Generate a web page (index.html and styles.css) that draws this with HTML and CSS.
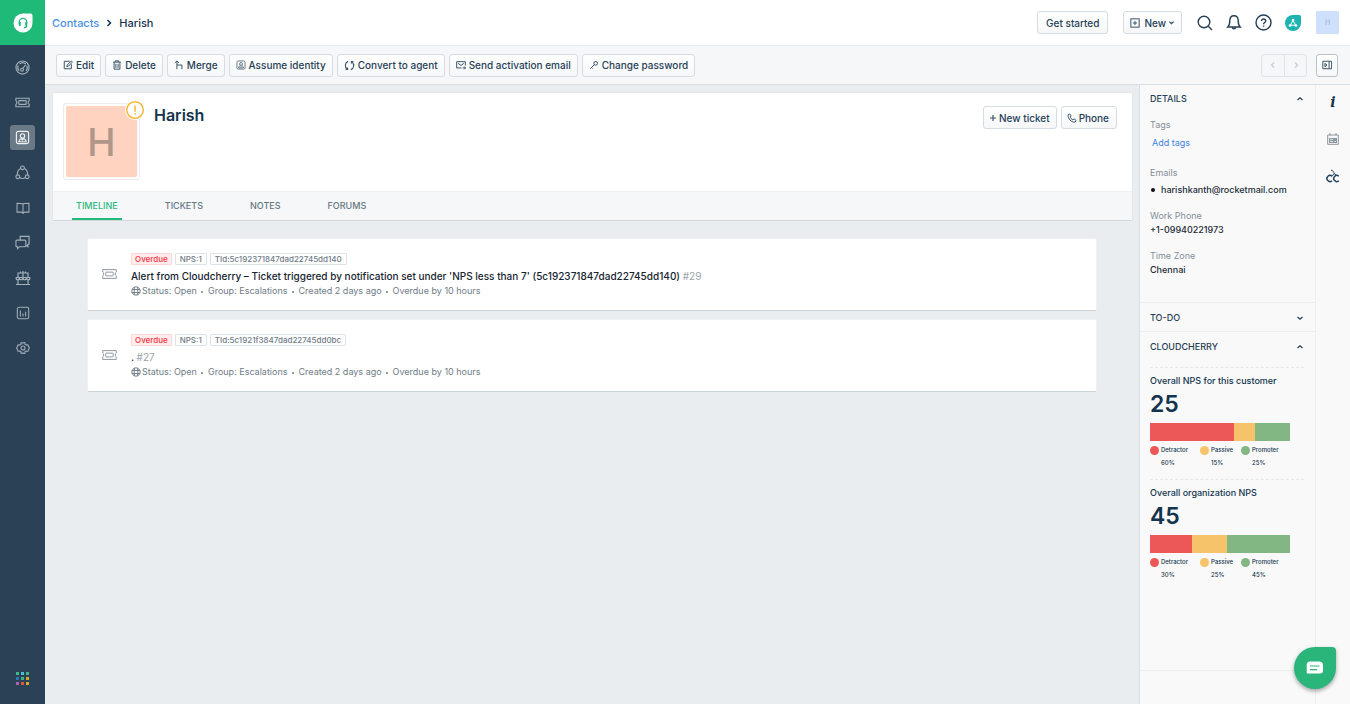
FILE: index.html
```html
<!DOCTYPE html>
<html lang="en">
<head>
<meta charset="utf-8">
<title>Harish - Contacts</title>
<link rel="stylesheet" href="styles.css">
</head>
<body>
<svg class="sprite" aria-hidden="true">
  <symbol id="person" viewBox="0 0 16 16"><rect x="1.500" y="1.500" width="13" height="13" rx="2"/><circle cx="8" cy="6.300" r="2.300"/><path d="M4 12.500c.4-2 1.300-3 2.700-3.300L8 10.500l1.300-1.300c1.400.3 2.300 1.300 2.700 3.300z"/></symbol>
  <symbol id="ticket" viewBox="0 0 16 12"><path d="M.8 1.300h14.400v2.700c-1.400.3-1.400 3.700 0 4v2.700H.8V8c1.400-.3 1.400-3.700 0-4z"/><rect class="core" x="4" y="4" width="8" height="4" rx=".5"/></symbol>
  <symbol id="globe" viewBox="0 0 16 16"><circle cx="8" cy="8" r="6.700"/><path d="M5.800 1.800c-1 4-1 8.400 0 12.400M10.200 1.800c1 4 1 8.400 0 12.400M1.600 5.600h12.800M1.600 10.400h12.800"/></symbol>
  <symbol id="up" viewBox="0 0 8 8"><path d="M1.500 5 4 2.800 6.500 5"/></symbol>
  <symbol id="down" viewBox="0 0 8 8"><path d="M1.500 3 4 5.200 6.500 3"/></symbol>
</svg>
<div class="app">
  <nav class="sidebar" aria-label="Main">
    <a class="logo" href="#" aria-label="Home"><svg width="20" height="20" viewBox="0 0 20 20"><path fill="#fff" d="M10 .5h7.500a2 2 0 0 1 2 2V10A9.500 9.500 0 1 1 10 .5z"/><path fill="none" stroke="#1fb978" stroke-width="1.300" d="M6.300 11V9a3.700 3.700 0 0 1 7.400 0v2M13.700 12c0 1.600-1 2.700-2.700 2.700"/><path stroke="#1fb978" stroke-width="2" stroke-linecap="round" d="M6.800 9.700v2.300M13.200 9.700v2.300"/></svg></a>
    <div class="nav-list">
      <a class="nav" href="#" aria-label="Dashboard"><svg class="ic" width="15" height="15" viewBox="0 0 16 16"><circle cx="8" cy="8" r="7"/><path d="M4.300 11.500A5 5 0 0 1 3.500 5.800M4.800 4.300a5 5 0 0 1 6.700 0M12.600 6a5 5 0 0 1-.8 5.500M8.300 9l3-3.700"/><circle cx="7.500" cy="10.300" r="1.500"/></svg></a>
      <a class="nav" href="#" aria-label="Tickets"><svg class="ic" width="15" height="11"><use href="#ticket"/></svg></a>
      <a class="nav active" href="#" aria-label="Contacts"><svg class="ic" width="15" height="15"><use href="#person"/></svg></a>
      <a class="nav" href="#" aria-label="Social"><svg class="ic" width="15" height="15" viewBox="0 0 16 16"><circle cx="8" cy="3" r="2"/><circle cx="3" cy="12.500" r="2"/><circle cx="13" cy="12.500" r="2"/><path d="M6 3.800C3.800 4.800 2.500 7 2.500 10M10 3.800c2.200 1 3.500 3.200 3.500 6.200M5 13.700c2 1 4 1 6 0"/></svg></a>
      <a class="nav" href="#" aria-label="Solutions"><svg class="ic" width="14" height="14" viewBox="0 0 16 16"><path d="M8 3.500C7 2.500 5.500 2.500 1.200 2.500v10.200H6l2 1.500 2-1.500h4.800V2.500C10.500 2.500 9 2.500 8 3.500zM8 3.500v10"/></svg></a>
      <a class="nav" href="#" aria-label="Forums"><svg class="ic" width="15" height="15" viewBox="0 0 16 16"><path d="M5.500 5V1.500H15v8.300h-1.300v2.700l-1.900-1.500M2 5.500h8.500q1 0 1 1v5q0 1-1 1H4.800L2.800 14.500v-2H2q-1 0-1-1v-5q0-1 1-1z"/></svg></a>
      <a class="nav" href="#" aria-label="Marketplace"><svg class="ic" width="16" height="16" viewBox="0 0 16 16"><path d="M1 14.500h14M3 14.500V9.500M13 14.500V9.500M1 7.500h14M3 7V3h10v4M8 1v6M5.500 1.500V3M10.500 1.500V3M1 7.500c0 3 3.500 3 3.500 0 0 3 3.500 3 3.500 0 0 3 3.500 3 3.500 0 0 3 3.500 3 3.500 0"/></svg></a>
      <a class="nav" href="#" aria-label="Reports"><svg class="ic" width="14" height="14" viewBox="0 0 16 16"><rect x="1.500" y="1.500" width="13" height="13" rx="2"/><path d="M5 12V5M8 12V8.500M11 12V6.500"/></svg></a>
      <a class="nav" href="#" aria-label="Admin"><svg class="ic" width="14" height="14" viewBox="0 0 16 16"><path d="M5.800 3.800 5.500 2.500Q6.500 1.200 7.300 2.200h1.400q.8-1 1.800.3l-.3 1.300 1.400.8 1.200-.4q1.700.2 1.200 1.400l.7 1.200q1.200.4 0 2.400l-.7 1.200q.5 1.200-1.200 1.400l-1.200-.4-1.400.8.300 1.300q-1 1.300-1.800.3H7.300q-.8 1-1.800-.3l.3-1.300-1.400-.8-1.200.4q-1.700-.2-1.200-1.400L1.300 9.200q-1.200-.4 0-2.400L2 5.600q-.5-1.200 1.200-1.400l1.200.4z"/><circle cx="8" cy="8" r="2.300"/></svg></a>
    </div>
    <button class="apps" aria-label="Switch product"><svg width="14" height="14" viewBox="0 0 14 14"><path fill="#43b787" d="M0 0h3v3H0z"/><path fill="#41bfd9" d="M5 0h3v3H5z"/><path fill="#4eb181" d="M10 0h3v3h-3z"/><path fill="#2e75b5" d="M0 5h3v3H0z"/><path fill="#3eb87a" d="M5 5h3v3H5z"/><path fill="#d9a52b" d="M10 5h3v3h-3z"/><path fill="#a567a9" d="M0 10h3v3H0z"/><path fill="#e5533f" d="M5 10h3v3H5z"/><path fill="#dda62a" d="M10 10h3v3h-3z"/></svg></button>
  </nav>
  <div class="page">
    <header class="topbar">
      <div class="crumbs"><a href="#">Contacts</a><svg class="ic dark" width="8" height="8" viewBox="0 0 8 8"><path d="M2.500 1 5.500 4 2.500 7"/></svg><span>Harish</span></div>
      <div class="top-actions">
        <button class="btn started">Get started</button>
        <button class="btn new"><svg class="ic" width="10" height="10" viewBox="0 0 12 12"><rect x="1" y="1" width="10" height="10"/><path d="M6 3.500v5M3.500 6h5"/></svg>New<svg class="ic chev" width="7" height="7"><use href="#down"/></svg></button>
        <button class="plain" aria-label="Search"><svg class="ic" width="16" height="16" viewBox="0 0 16 16"><circle cx="7" cy="7" r="5.800"/><path d="m11.300 11.300 3.700 3.700"/></svg></button>
        <button class="plain" aria-label="Notifications"><svg class="ic" width="16" height="18" viewBox="0 0 16 18"><path d="M1.800 13C3.500 11.500 3.800 10 3.800 6.500c0-3 1.600-4.800 4.200-4.800s4.200 1.800 4.200 4.800c0 3.500.3 5 2 6.500zM6.300 13.500c.3 1.700 3.100 1.700 3.400 0"/></svg></button>
        <button class="plain" aria-label="Help"><svg class="ic" width="17" height="17" viewBox="0 0 17 17"><circle cx="8.500" cy="8.500" r="7.500"/><path d="M6.500 7c0-2.800 4.200-2.700 4.200 0 0 1.500-2.100 1.500-2.100 3.200M8.600 11.500v1.300"/></svg></button>
        <button class="plain" aria-label="Freshworks"><svg width="16" height="16" viewBox="0 0 16 16"><path fill="#1cb3b0" d="M8 0h6.500A1.500 1.500 0 0 1 16 1.500V8a8 8 0 1 1-8-8z"/><path fill="none" stroke="#fff" d="M8 5.500 5.300 10.200h5.400z"/><circle cx="8" cy="5" r="1.300" fill="#fff"/><circle cx="5" cy="10.500" r="1.300" fill="#fff"/><circle cx="11" cy="10.500" r="1.300" fill="#fff"/></svg></button>
        <button class="me">H</button>
      </div>
    </header>
    <div class="toolbar">
      <button class="btn"><svg class="ic" width="10" height="10" viewBox="0 0 12 12"><path d="M8 1.500H1.500v9h8.500V5M4.500 8l.5-2 5-4.800 1.300 1.300L6.500 7.400z"/></svg>Edit</button>
      <button class="btn"><svg class="ic" width="10" height="10" viewBox="0 0 12 12"><path d="M1.500 2.500h9M4 2.500V1h4v1.500M2.500 2.500V11h7V2.500M4.700 4.500v5M7.300 4.500v5"/></svg>Delete</button>
      <button class="btn"><svg class="ic" width="10" height="10" viewBox="0 0 12 12"><path d="M3.500 11V1.500M1 3.500l2.500-2.300L6 3.500M3.500 6H9.500v5"/></svg>Merge</button>
      <button class="btn"><svg class="ic" width="10" height="10"><use href="#person"/></svg>Assume identity</button>
      <button class="btn"><svg class="ic" width="11" height="11" viewBox="0 0 12 12"><path d="M4.500 1.500C.8 3 .5 7.800 3.500 10M1.800 10.200h2.100V8.100M7.500 10.500C11.200 9 11.500 4.200 8.500 2M10.200 1.800H8.100v2.100"/></svg>Convert to agent</button>
      <button class="btn"><svg class="ic" width="10" height="10" viewBox="0 0 12 12"><path d="M6.500 9.500H.8V2h10.400v4.500M2.500 4l3.500 2.500L9.500 4M8 9.500h3.500M9.800 7.700l1.700 1.800-1.700 1.700"/></svg>Send activation email</button>
      <button class="btn"><svg class="ic" width="10" height="10" viewBox="0 0 12 12"><circle cx="8" cy="4" r="2.200"/><path d="M6.400 5.600 1.500 10.500M3 9l1.300 1.300"/></svg>Change password</button>
      <div class="pager">
        <button aria-label="Previous" disabled><svg class="ic" width="8" height="8" viewBox="0 0 8 8"><path d="M5 1.500 2.500 4 5 6.500"/></svg></button><button aria-label="Next" disabled><svg class="ic" width="8" height="8" viewBox="0 0 8 8"><path d="M3 1.500 5.500 4 3 6.500"/></svg></button>
      </div>
      <button class="btn toggle" aria-label="Toggle side panel"><svg class="ic" width="10" height="10" viewBox="0 0 12 12"><path d="M1 1.500h10.500v9H1zM8.500 1.500v9M3.500 4l2.500 2-2.500 2z"/></svg></button>
    </div>
    <div class="body">
      <main class="content">
        <section class="profile">
          <div class="profile-top">
            <div class="avatar"><div class="avatar-face">H</div><span class="alert"><svg width="20" height="20" viewBox="0 0 20 20"><circle cx="10" cy="10" r="10" fill="#fff"/><circle cx="10" cy="10" r="8.300" fill="none" stroke="#f8b739" stroke-width="1.500"/><path d="M10 5.500v6.200M10 13v1.400" stroke="#f8a51b" stroke-width="1.300"/></svg></span></div>
            <h1>Harish</h1>
            <div class="profile-actions">
              <button class="btn"><svg class="ic" width="6" height="6" viewBox="0 0 6 6"><path d="M3 0v6M0 3h6"/></svg>New ticket</button>
              <button class="btn call"><svg class="ic" width="10" height="10" viewBox="0 0 12 12"><path d="M1.300 2.200 3 1l2 2.500-1.200 1.300c.5 1.500 1.700 2.800 3.300 3.500L8.500 7 11 9l-1.300 1.900C5.500 11.500.8 7 1.300 2.200z"/></svg>Phone</button>
            </div>
          </div>
          <nav class="tabs"><a class="on" href="#">TIMELINE</a><a href="#">TICKETS</a><a href="#">NOTES</a><a href="#">FORUMS</a></nav>
        </section>
        <section class="timeline">
          <article class="entry">
            <svg class="ic tk" width="15" height="12"><use href="#ticket"/></svg>
            <div>
              <div class="tags"><span class="tag late">Overdue</span><span class="tag">NPS:1</span><span class="tag">TId:5c192371847dad22745dd140</span></div>
              <h2><a href="#">Alert from Cloudcherry – Ticket triggered by notification set under 'NPS less than 7' (5c192371847dad22745dd140)</a> <span>#29</span></h2>
              <p class="meta"><svg class="ic" width="10" height="10"><use href="#globe"/></svg><span>Status: Open</span><i></i><span>Group: Escalations</span><i></i><span>Created 2 days ago</span><i></i><span>Overdue by 10 hours</span></p>
            </div>
          </article>
          <article class="entry">
            <svg class="ic tk" width="15" height="12"><use href="#ticket"/></svg>
            <div>
              <div class="tags"><span class="tag late">Overdue</span><span class="tag">NPS:1</span><span class="tag">TId:5c1921f3847dad22745dd0bc</span></div>
              <h2><a href="#">.</a> <span>#27</span></h2>
              <p class="meta"><svg class="ic" width="10" height="10"><use href="#globe"/></svg><span>Status: Open</span><i></i><span>Group: Escalations</span><i></i><span>Created 2 days ago</span><i></i><span>Overdue by 10 hours</span></p>
            </div>
          </article>
        </section>
      </main>
      <aside class="panel">
        <section class="details">
          <button class="fold">DETAILS<svg class="ic" width="8" height="8"><use href="#up"/></svg></button>
          <dl>
            <div class="g-tags"><dt>Tags</dt><dd><a href="#">Add tags</a></dd></div>
            <div class="g-mail"><dt>Emails</dt><dd><b></b>harishkanth@rocketmail.com</dd></div>
            <div><dt>Work Phone</dt><dd>+1-09940221973</dd></div>
            <div><dt>Time Zone</dt><dd>Chennai</dd></div>
          </dl>
        </section>
        <section class="todo"><button class="fold">TO-DO<svg class="ic" width="8" height="8"><use href="#down"/></svg></button></section>
        <section class="cherry">
          <button class="fold">CLOUDCHERRY<svg class="ic" width="8" height="8"><use href="#up"/></svg></button>
          <div class="nps">
            <h3>Overall NPS for this customer</h3>
            <strong>25</strong>
            <div class="bar"><span class="red" style="width:60%"></span><span class="amber" style="width:15%"></span><span class="green" style="width:25%"></span></div>
            <ul class="legend"><li class="det"><b class="red"></b>Detractor<em>60%</em></li><li class="pas"><b class="amber"></b>Passive<em>15%</em></li><li><b class="green"></b>Promoter<em>25%</em></li></ul>
          </div>
          <div class="nps">
            <h3>Overall organization NPS</h3>
            <strong>45</strong>
            <div class="bar"><span class="red" style="width:30%"></span><span class="amber" style="width:25%"></span><span class="green" style="width:45%"></span></div>
            <ul class="legend"><li class="det"><b class="red"></b>Detractor<em>30%</em></li><li class="pas"><b class="amber"></b>Passive<em>25%</em></li><li><b class="green"></b>Promoter<em>45%</em></li></ul>
          </div>
        </section>
        <div class="panel-foot"></div>
      </aside>
      <div class="rail">
        <button class="info" aria-label="Details">i</button>
        <button aria-label="To-do"><svg width="12" height="12" viewBox="0 0 12 12" fill="none" stroke="#8c979e"><path d="M3 0v2.500M9 0v2.500M.7 2h10.600v9.300H.7z"/><path fill="#8c979e" stroke="none" d="M2 5h8v5H2z"/><path stroke="#dde1e4" d="M3 6.500h3M3 8.500h3M7.500 8.500H9"/></svg></button>
        <button aria-label="Cloudcherry"><svg width="14" height="14" viewBox="0 0 14 14" fill="none" stroke="#26435a" stroke-width="1.500"><path d="M6 7.300a3 3 0 1 0 0 4.400M12.800 7.300a3 3 0 1 0 0 4.400"/><path stroke-width="1" d="M5 1c1.800.5 3 1.800 3.300 4L5 7.500M8.300 4.500l2.500 2"/></svg></button>
      </div>
    </div>
  </div>
</div>
<button class="chat" aria-label="Chat"><svg width="18" height="14" viewBox="0 0 18 14"><path fill="#fff" d="M4 .5h9a4 4 0 0 1 4 4v5a3 3 0 0 1-3 3H1.500a.8.8 0 0 1-.8-.8V4A3.500 3.500 0 0 1 4 .5z"/><path stroke="#2ab57a" stroke-width="1.200" d="M4 5h9.500M4 8.700h7"/></svg></button>
</body>
</html>
```
FILE: styles.css
```css
* { box-sizing: border-box; }
body {
  margin: 0;
  font-family: Inter, "Liberation Sans", sans-serif;
  font-size: 9px;
  line-height: 12px;
  color: #12344d;
}
a { color: inherit; text-decoration: none; }
button { font: inherit; color: inherit; border: 0; padding: 0; background: none; cursor: pointer; }
h1, h2, h3, p, ul, dl, dd { margin: 0; padding: 0; }
ul { list-style: none; }
svg { flex: none; display: block; }
.sprite { display: none; }
.ic { fill: none; stroke: currentColor; stroke-width: 1.2; }

.app { display: flex; min-height: 100vh; }
.page { flex: 1; min-width: 0; display: flex; flex-direction: column; }

.sidebar { width: 45px; background: #2b4155; display: flex; flex-direction: column; align-items: center; color: #a3b0bb; }
.logo { width: 45px; height: 45px; background: #1fb978; display: flex; align-items: center; justify-content: center; }
.nav-list { display: flex; flex-direction: column; gap: 10px; padding-top: 10px; flex: 1; }
.nav { width: 25px; height: 25px; border-radius: 3px; display: flex; align-items: center; justify-content: center; }
.nav.active { background: #6a7986; color: #f0f3f5; }
.apps { padding-bottom: 18px; }

.topbar { height: 46px; background: #fff; border-bottom: 1px solid #ebeef0; display: flex; justify-content: space-between; align-items: center; padding: 0 11px 0 7px; }
.crumbs { display: flex; align-items: center; gap: 6px; font-size: 11px; font-weight: 500; }
.crumbs a { color: #4a90e2; }
.dark { stroke-width: 1.5; }
.top-actions { display: flex; align-items: center; gap: 13px; }
.btn {
  height: 23px;
  border: 1px solid #d5dce2;
  border-radius: 3px;
  background: linear-gradient(#fff, #f5f7f9);
  color: #264055;
  font-size: 10px;
  font-weight: 500;
  padding: 0 6px;
  display: flex;
  align-items: center;
  gap: 3px;
  white-space: nowrap;
}
.btn .ic { color: #3d5568; }
.started { padding: 0 8px; margin-right: 2px; }
.new { gap: 4px; margin-right: 2px; }
.new .chev { stroke-width: 1.5; margin-left: -2px; }
.plain { color: #264055; }
.plain .ic { stroke-width: 1.4; }
.me { width: 23px; height: 23px; margin-left: 2px; background: #cfe0fc; color: #9fb1cb; font-size: 7px; border-radius: 1px; }

.toolbar { height: 39px; background: #f5f7f9; border-bottom: 1px solid #d8dfe5; display: flex; align-items: center; gap: 4px; padding: 0 12px 0 11px; }
.pager { display: flex; margin-left: auto; margin-right: 5px; border: 1px solid #dfe4e8; border-radius: 3px; height: 23px; color: #c3ccd3; }
.pager button { width: 22px; display: flex; align-items: center; justify-content: center; }
.pager button + button { border-left: 1px solid #dfe4e8; }
.toggle { width: 22px; padding: 0; justify-content: center; border-color: #b8c2cb; }

.body { flex: 1; display: flex; }
.content { flex: 1; min-width: 0; background: #e9edf0; padding: 7px 6px 20px 7px; }
.profile { background: #fff; border: 1px solid #e2e7eb; border-bottom-color: #d0d7dd; border-radius: 2px; }
.profile-top { display: flex; align-items: flex-start; padding: 10px 15px 11px 10px; }
.avatar { position: relative; width: 77px; height: 77px; border: 1px solid #ececec; border-radius: 3px; padding: 2px; }
.avatar-face { height: 100%; border-radius: 2px; background: #ffd3bf; color: #b1968a; display: flex; align-items: center; justify-content: center; font-size: 38px; font-weight: 500; }
.alert { position: absolute; top: -4px; right: -6px; }
h1 { font-size: 16px; line-height: 24px; font-weight: 600; padding-left: 14px; flex: 1; }
.profile-actions { display: flex; gap: 4px; padding-top: 3px; }
.call { gap: 2px; padding: 0 7px 0 5px; }
.tabs { display: flex; gap: 39px; height: 29px; background: #f5f7f9; border-top: 1px solid #eef1f3; padding-left: 19px; }
.tabs a { padding: 8px 4px 0; font-size: 9px; font-weight: 500; color: #687882; border-bottom: 2px solid transparent; }
.tabs .on { color: #2bb97c; border-color: #1fb978; }

.timeline { display: flex; flex-direction: column; gap: 8px; padding: 17px 36px 0 35px; }
.entry { display: flex; gap: 14px; background: #fff; border: 1px solid #eef1f3; border-bottom-color: #ccd4da; border-radius: 2px; padding: 14px 14px 12px; }
.tk { margin-top: 15px; color: #87929c; stroke-width: 1; }
.tk .core { fill: #d5dade; }
.tags { display: flex; gap: 3px; }
.tag { font-size: 8px; line-height: 10px; font-weight: 500; color: #6f7c87; border: 1px solid #dde2e6; border-radius: 1px; padding: 0 4px; }
.late { color: #f5333f; background: #ffecec; border-color: #ffd5d5; padding: 0 3px; }
h2 { font-size: 10px; line-height: 16px; padding-top: 3px; font-weight: 500; color: #16242f; }
h2 span { color: #98a4ae; font-weight: 400; }
.meta { display: flex; align-items: center; height: 14px; color: #6f7c87; }
.meta .ic { margin-right: 1px; stroke-width: 1.5; }
.meta i { width: 2px; height: 2px; border-radius: 1px; background: #6f7c87; margin: 1px 5px 0 4px; }

.panel { width: 176px; background: #f9f9f9; border-left: 1px solid #d8dfe5; display: flex; flex-direction: column; }
.fold { width: 100%; height: 28px; display: flex; align-items: center; justify-content: space-between; padding: 0 11px 0 10px; font-weight: 500; color: #263f53; }
.fold .ic { stroke-width: 1.3; }
.details { height: 218px; border-bottom: 1px solid #eceeef; }
dl { padding: 6px 10px 0; display: flex; flex-direction: column; gap: 14px; }
dt { color: #848f98; }
dd { color: #1c2c38; font-weight: 500; padding-top: 2px; }
.g-tags dd { padding: 6px 0 0 2px; color: #3d7fe0; font-weight: 400; }
.g-tags { padding-bottom: 4px; }
.g-mail dd { display: flex; align-items: center; gap: 6px; padding-top: 5px; }
.g-mail b { width: 4px; height: 4px; border-radius: 2px; background: #111; margin-left: 1px; }
.todo { border-bottom: 1px solid #eceeef; }
.todo .fold { padding-top: 1px; }
.cherry { flex: 1; }
.cherry .fold { height: 35px; padding-bottom: 5px; }
.nps { height: 112px; margin: 0 11px 0 10px; border-top: 1px dashed #e4e6e8; padding-top: 6px; }
h3 { font-size: 9px; line-height: 13px; font-weight: 500; }
.nps strong { display: block; font-size: 23px; line-height: 34px; font-weight: 600; }
.bar { display: flex; width: 140px; height: 18px; margin-top: 2px; }
.red { background: #ec5757; }
.amber { background: #f6c36b; }
.green { background: #82b683; }
.legend { display: flex; padding-top: 3px; font-size: 6px; font-weight: 500; }
.legend li { display: grid; grid-template-columns: 11px auto; row-gap: 1px; justify-content: start; align-items: center; }
.legend b { width: 9px; height: 9px; border-radius: 50%; }
.legend em { grid-column: 2; font-style: normal; }
.det { width: 50px; }
.pas { width: 41px; }
.panel-foot { height: 34px; border-top: 1px solid #eceeef; }

.rail { width: 35px; background: #f9f9f9; border-left: 1px solid #eceeef; display: flex; flex-direction: column; align-items: center; gap: 24px; padding-top: 10px; }
.info { font: italic bold 14px/14px "DejaVu Serif", serif; }

.chat { position: fixed; right: 14px; bottom: 15px; width: 42px; height: 42px; border-radius: 50% 4px 50% 50%; background: #2ab57a; box-shadow: 0 2px 4px rgba(0, 0, 0, .35); display: flex; align-items: center; justify-content: center; }
```
